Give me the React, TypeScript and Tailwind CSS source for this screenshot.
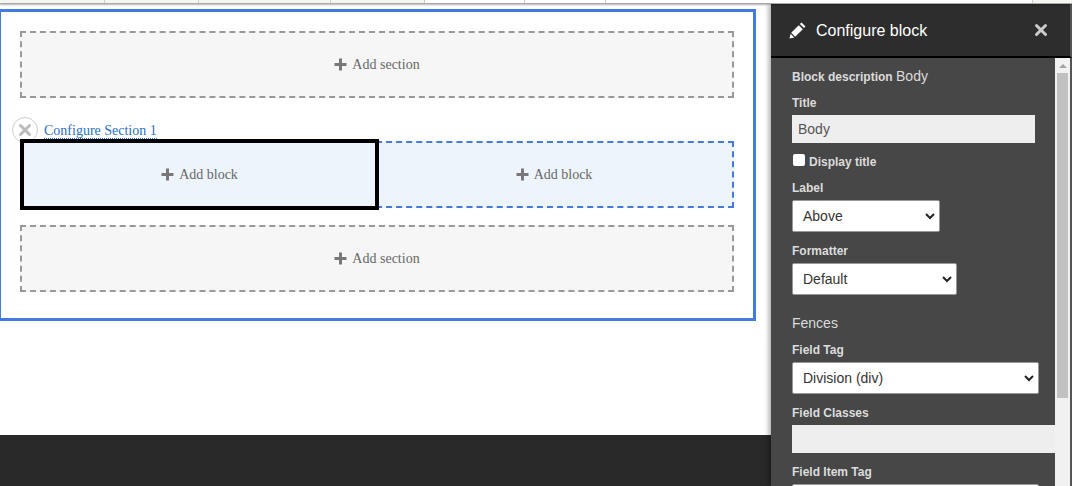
import React from 'react';
import { X } from 'lucide-react';

const sans = "font-['Liberation_Sans',Arial,sans-serif]";
const serif = "font-['Liberation_Serif','Times_New_Roman',serif]";

const AddLabel: React.FC<{ text: string }> = ({ text }) => (
  <span className={`flex items-center gap-[5px] text-[14px] leading-none text-[#686868] ${serif}`}>
    <svg width="13" height="13" viewBox="0 0 13 13" fill="#787878">
      <path d="M5 0.5h3v4.5h4.5v3H8v4.5H5V8H0.5V5H5z" />
    </svg>
    {text}
  </span>
);

const FieldLabel: React.FC<{ children: React.ReactNode }> = ({ children }) => (
  <label className="block text-[12px] leading-[14px] font-bold text-[#dcdcdc]">{children}</label>
);

const Select: React.FC<{ value: string; width: string }> = ({ value, width }) => (
  <div className={`${width} h-[32px] bg-white border border-[#999] rounded-[2px] flex items-center justify-between pl-[10px] pr-[3px] text-[14px] text-[#333]`}>
    <span>{value}</span>
    <svg width="12" height="12" viewBox="0 0 12 12" fill="none" stroke="#222" strokeWidth="2">
      <path d="M2 4l4 4 4-4" />
    </svg>
  </div>
);

export default function App() {
  return (
    <div className={`w-[1072px] h-[486px] overflow-hidden bg-white flex flex-col ${serif}`}>
      {/* strip of the page behind the tray */}
      <div className="relative z-20 h-[4px] shrink-0 flex bg-[#f5f5f2] border-b border-[#aaa] shadow-[0_1px_2px_rgba(0,0,0,0.3)]">
        <div className="w-[105px] border-r border-[#ccc]" />
        <div className="w-[94px] border-r border-[#ccc]" />
        <div className="w-[132px] border-r border-[#ccc]" />
        <div className="w-[94px] border-r border-[#ccc]" />
        <div className="w-[100px] border-r border-[#ccc] bg-white" />
        <div className="w-[81px] border-r border-[#ccc] bg-white" />
        <div className="w-[427px] border-r border-[#ccc] bg-white" />
        <div className="flex-1" />
      </div>

      <div className="flex-1 min-h-0 flex">
        {/* page column */}
        <div className="w-[771px] shrink-0 flex flex-col">
          <div className="mt-[5px] -ml-[2px] w-[758px] h-[312px] shrink-0 border-[3px] border-[#4479de] pt-[19px] px-[19px]">
            <div className="h-[67px] w-[714px] border-2 border-dashed border-[#999] bg-[#f6f6f6] flex items-center justify-center">
              <AddLabel text="Add section" />
            </div>

            <div className="relative h-[43px] w-[714px]">
              <span className="absolute left-[24px] top-[25px] text-[14px] leading-[15px] text-[#2a6fc9] border-b border-dotted border-[#2a6fc9]">
                Configure Section 1
              </span>
              <div className="absolute -left-[8px] top-[19px] w-[26px] h-[26px] rounded-full bg-white border border-[#ccc] flex items-center justify-center z-10">
                <X size={18} strokeWidth={4} className="text-[#bbb]" />
              </div>
            </div>

            <div className="flex w-[714px] h-[67px]">
              <div className="relative z-20 -mt-[2px] w-[359px] h-[71px] shrink-0 border-[4px] border-black bg-[#edf4fc] flex items-center justify-center">
                <AddLabel text="Add block" />
              </div>
              <div className="-ml-[3px] flex-1 border-2 border-l-0 border-dashed border-[#4479de] bg-[#edf4fc] flex items-center justify-center">
                <AddLabel text="Add block" />
              </div>
            </div>

            <div className="mt-[17px] h-[67px] w-[714px] border-2 border-dashed border-[#999] bg-[#f6f6f6] flex items-center justify-center">
              <AddLabel text="Add section" />
            </div>
          </div>

          <div className="flex-1" />
          <div className="h-[51px] shrink-0 bg-[#292929]" />
        </div>

        {/* off-canvas */}
        <aside className={`relative z-10 flex-1 min-w-0 flex flex-col shadow-[-2px_0_5px_rgba(0,0,0,0.35)] ${sans}`}>
          <header className="h-[54px] shrink-0 bg-[#2d2d2d] border-b-2 border-b-black border-r-2 border-r-[#555] flex items-center pl-[18px] pr-[20px] text-white">
            <svg width="18" height="18" viewBox="0 0 18 18" fill="#fff" className="mr-[9px]">
              <path d="M12.5 1.5l4 4-1.6 1.6-4-4zM9.8 4.2l4 4-7.6 7.6-4-4zM1.6 12.8l3.6 3.6-4.7 1.1z" />
            </svg>
            <h2 className="text-[16px] leading-none flex-1 pt-px">Configure block</h2>
            <X size={18} strokeWidth={4} className="text-[#ccc]" />
          </header>

          <div className="flex-1 min-h-0 flex bg-[#474747]">
            <div className="w-[284px] shrink-0 overflow-hidden pl-[21px] pt-[10px]">
              <p className="text-[12px] leading-[16px] font-bold text-[#dcdcdc]">
                Block description <span className="text-[14px] font-normal">Body</span>
              </p>
              <div className="mt-[11px]"><FieldLabel>Title</FieldLabel></div>
              <div className="mt-[5px] w-[243px] h-[28px] bg-[#eee] px-[6px] flex items-center text-[14px] text-[#555]">Body</div>
              <div className="mt-[12px] ml-px flex items-start gap-[4px]">
                <span className="-mt-px w-[12px] h-[12px] rounded-[2px] bg-white" />
                <FieldLabel>Display title</FieldLabel>
              </div>
              <div className="mt-[12px]"><FieldLabel>Label</FieldLabel></div>
              <div className="mt-[5px]"><Select value="Above" width="w-[148px]" /></div>
              <div className="mt-[12px]"><FieldLabel>Formatter</FieldLabel></div>
              <div className="mt-[5px]"><Select value="Default" width="w-[165px]" /></div>
              <p className="mt-[20px] text-[14px] leading-[16px] text-[#dcdcdc]">Fences</p>
              <div className="mt-[12px]"><FieldLabel>Field Tag</FieldLabel></div>
              <div className="mt-[5px]"><Select value="Division (div)" width="w-[247px]" /></div>
              <div className="mt-[12px]"><FieldLabel>Field Classes</FieldLabel></div>
              <div className="mt-[5px] w-[263px] h-[28px] bg-[#eee]" />
              <div className="mt-[12px]"><FieldLabel>Field Item Tag</FieldLabel></div>
              <div className="mt-[5px]"><Select value="" width="w-[247px]" /></div>
            </div>

            <div className="w-[15px] shrink-0 bg-[#f1f1f1] flex flex-col px-[2px]">
              <div className="h-[15px] flex items-center justify-center">
                <span className="w-0 h-0 border-x-[4px] border-x-transparent border-b-[4px] border-b-[#a3a3a3]" />
              </div>
              <div className="h-[325px] bg-[#c1c1c1]" />
            </div>
            <div className="flex-1 bg-[#555]" />
          </div>
        </aside>
      </div>
    </div>
  );
}
